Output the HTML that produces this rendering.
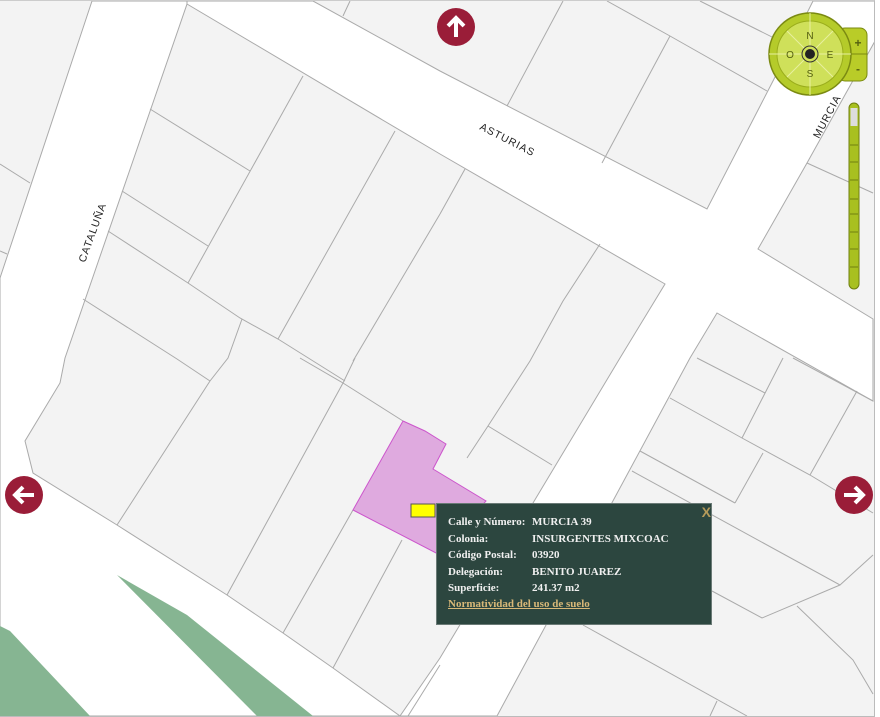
<!DOCTYPE html>
<html><head><meta charset="utf-8"><style>
html,body{margin:0;padding:0;width:880px;height:717px;overflow:hidden;background:#fff;font-family:"Liberation Serif",serif}
#map{position:absolute;left:0;top:0;width:874px;height:715px;border-right:1px solid #bbb;border-bottom:1px solid #bbb;border-top:1px solid #ccc;box-sizing:content-box;overflow:hidden}
.pop{position:absolute;left:436px;top:502px;width:276px;height:122px;background:#2c463f;border:1px solid #6a7a76;box-sizing:border-box;color:#f0f0f0;font-weight:bold;font-size:11px}
.pop table{position:absolute;left:11px;top:11px;border-collapse:collapse}
.pop td{padding:0 0 2px 0;line-height:14.5px;white-space:nowrap}
.pop td:first-child{width:84px}
.pop a{position:absolute;left:11px;top:94px;color:#d8b878;text-decoration:underline;font-size:11px}
.x{position:absolute;right:0px;top:0px;color:#b59a5a;font-family:"Liberation Sans",sans-serif;font-weight:bold;font-size:14px}
.arr{position:absolute;width:38px;height:38px;border-radius:50%;background:#9a1d38}
</style></head><body>
<div id="map">
<svg width="875" height="715" viewBox="0 0 875 715" style="position:absolute;left:0;top:0">
<rect width="875" height="715" fill="#f3f3f3"/>
<g fill="#fff" stroke="#aaa" stroke-width="1">
<polygon points="92,0 187,0 187,3 65,357 60,382 25,440 33,472 117,524 227,594 283,632 333,667 400,715 0,715 0,277"/>
<polygon points="187,0 313,0 440,70 707,208 773,80 813,0 875,0 875,40 807,162 758,248 873,318 873,400 717,312 690,357 497,715 400,715 440,657 620,357 665,283 440,153 187,3"/>
</g>
<g fill="#86b592">
<polygon points="0,625 10,630 90,715 0,715"/>
<polygon points="117,574 187,614 313,715 257,715"/>
</g>
<g stroke="#aaa" stroke-width="1" fill="none">
<polyline points="0,163 30,182"/><polyline points="0,250 7,253"/>
<polyline points="350,0 343,15"/>
<polyline points="563,0 507,105"/><polyline points="607,0 670,35 767,90"/><polyline points="670,35 602,162"/>
<polyline points="700,0 760,30 840,70"/>
<polyline points="807,162 873,192"/>
<polyline points="150,108 250,170"/><polyline points="303,75 188,282"/>
<polyline points="122,190 208,245"/><polyline points="108,230 188,282 240,317 278,338 345,380"/>
<polyline points="395,130 278,338"/><polyline points="83,298 177,358 210,380"/>
<polyline points="242,318 228,357 210,380 117,524"/><polyline points="440,213 353,360"/>
<polyline points="465,168 440,213"/><polyline points="600,243 563,300 530,360 488,425 467,457"/>
<polyline points="300,357 343,382 403,420"/><polyline points="355,357 343,382 227,594"/>
<polyline points="353,509 283,632"/><polyline points="402,539 333,667"/>
<polyline points="440,664 408,715"/>
<polyline points="488,425 552,464"/>
<polyline points="697,357 765,392"/><polyline points="793,357 873,400"/>
<polyline points="670,397 742,437 810,474 873,512"/>
<polyline points="783,357 742,437"/><polyline points="857,390 810,474"/>
<polyline points="640,450 735,502"/><polyline points="763,452 735,502"/>
<polyline points="632,470 840,584 873,554"/>
<polyline points="712,590 762,617 840,584"/>
<polyline points="797,605 853,659 873,693"/>
<polyline points="583,624 747,715"/><polyline points="717,700 710,715"/>
</g>
<polygon points="403,420 425,430 446,443 433,468 486,500 438,553 353,509" fill="#dfaadf" stroke="#cc55cc" stroke-width="1"/>
<rect x="411" y="503" width="24" height="13" fill="#ffff00" stroke="#555"/>
<g font-family="Liberation Sans,sans-serif" font-size="10.5" fill="#222" letter-spacing="1">
<text transform="translate(479,128) rotate(27)">ASTURIAS</text>
<text transform="translate(85,262) rotate(-70)">CATALUÑA</text>
<text transform="translate(819,138) rotate(-62)">MURCIA</text>
</g>
<g>
<rect x="838" y="27" width="29" height="53" rx="7" fill="#b9cc28" stroke="#7a8a10"/>
<line x1="838" y1="53" x2="867" y2="53" stroke="#7a8a10"/>
<text x="858" y="46" font-family="Liberation Sans" font-size="12" font-weight="bold" fill="#556010" text-anchor="middle">+</text>
<text x="858" y="72" font-family="Liberation Sans" font-size="12" font-weight="bold" fill="#556010" text-anchor="middle">-</text>
<circle cx="810" cy="53" r="41" fill="#b5cb2a" stroke="#7b8a12" stroke-width="1.5"/>
<circle cx="810" cy="53" r="33" fill="#cfe05a" stroke="#9aad1c"/>
<g stroke="#e8f0a0" stroke-width="1"><line x1="810" y1="12" x2="810" y2="94"/><line x1="769" y1="53" x2="851" y2="53"/>
<line x1="787" y1="30" x2="833" y2="76"/><line x1="833" y1="30" x2="787" y2="76"/></g>
<circle cx="810" cy="53" r="8" fill="#cfe05a" stroke="#333"/><circle cx="810" cy="53" r="5" fill="#222"/>
<g font-family="Liberation Sans" font-size="10" fill="#556010" text-anchor="middle">
<text x="810" y="38">N</text><text x="810" y="76">S</text><text x="790" y="57">O</text><text x="830" y="57">E</text></g>
</g>
<rect x="849" y="102" width="10" height="186" rx="5" fill="#a8c020" stroke="#6f7f10"/>
<rect x="850.5" y="107" width="7" height="18" fill="#ddd"/>
<g stroke="#6f7f10"><line x1="850" y1="144" x2="858" y2="144"/><line x1="850" y1="161" x2="858" y2="161"/><line x1="850" y1="179" x2="858" y2="179"/><line x1="850" y1="198" x2="858" y2="198"/><line x1="850" y1="213" x2="858" y2="213"/><line x1="850" y1="231" x2="858" y2="231"/><line x1="850" y1="248" x2="858" y2="248"/><line x1="850" y1="266" x2="858" y2="266"/></g>
</svg>
<div class="arr" style="left:437px;top:7px"><svg width="38" height="38"><path d="M19 29V10M11 18l8-8 8 8" stroke="#fff" stroke-width="4" fill="none"/></svg></div>
<div class="arr" style="left:5px;top:475px"><svg width="38" height="38"><path d="M29 19H10M18 11l-8 8 8 8" stroke="#fff" stroke-width="4" fill="none"/></svg></div>
<div class="arr" style="left:835px;top:475px"><svg width="38" height="38"><path d="M9 19h19M20 11l8 8-8 8" stroke="#fff" stroke-width="4" fill="none"/></svg></div>
<div class="pop">
<div class="x">X</div>
<table>
<tr><td>Calle y Número:</td><td>MURCIA 39</td></tr>
<tr><td>Colonia:</td><td>INSURGENTES MIXCOAC</td></tr>
<tr><td>Código Postal:</td><td>03920</td></tr>
<tr><td>Delegación:</td><td>BENITO JUAREZ</td></tr>
<tr><td>Superficie:</td><td>241.37 m2</td></tr>
</table>
<a>Normatividad del uso de suelo</a>
</div>
</div>
</body></html>
